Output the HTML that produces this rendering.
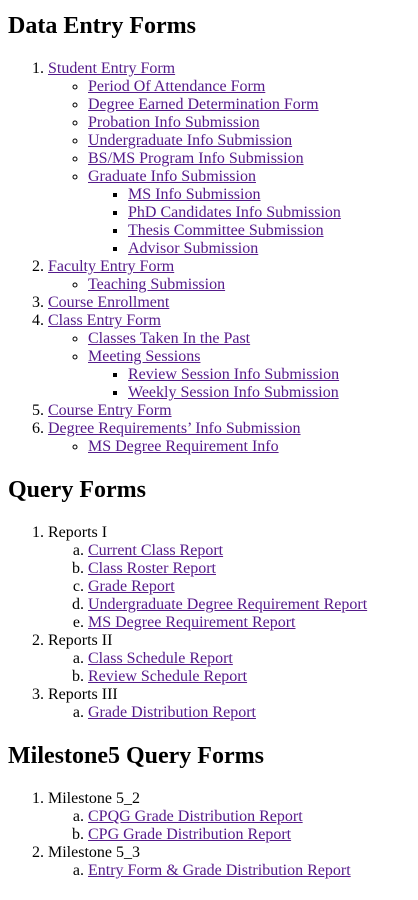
<!DOCTYPE html>
<html><head><meta charset="utf-8"><style>
body{margin:0;padding:1px 8px 0;font-family:"Liberation Serif",serif;font-size:16px;line-height:18px;color:#000;background:#fff}
h2{font-size:24px;line-height:28px;margin:20px 0;font-weight:bold}
h2:first-child{margin-top:11px}
ol,ul{margin:0;padding-left:40px}
body>ol{margin:20px 0}
a{color:#551a8b;text-decoration:underline}
ul{list-style:circle}
ul ul{list-style:square}
ol ol{list-style:lower-alpha}
</style></head><body>
<h2>Data Entry Forms</h2>
<ol>
<li><a>Student Entry Form</a>
<ul>
<li><a>Period Of Attendance Form</a></li>
<li><a>Degree Earned Determination Form</a></li>
<li><a>Probation Info Submission</a></li>
<li><a>Undergraduate Info Submission</a></li>
<li><a>BS/MS Program Info Submission</a></li>
<li><a>Graduate Info Submission</a>
<ul>
<li><a>MS Info Submission</a></li>
<li><a>PhD Candidates Info Submission</a></li>
<li><a>Thesis Committee Submission</a></li>
<li><a>Advisor Submission</a></li>
</ul></li>
</ul></li>
<li><a>Faculty Entry Form</a>
<ul><li><a>Teaching Submission</a></li></ul></li>
<li><a>Course Enrollment</a></li>
<li><a>Class Entry Form</a>
<ul>
<li><a>Classes Taken In the Past</a></li>
<li><a>Meeting Sessions</a>
<ul>
<li><a>Review Session Info Submission</a></li>
<li><a>Weekly Session Info Submission</a></li>
</ul></li>
</ul></li>
<li><a>Course Entry Form</a></li>
<li><a>Degree Requirements’ Info Submission</a>
<ul><li><a>MS Degree Requirement Info</a></li></ul></li>
</ol>
<h2>Query Forms</h2>
<ol>
<li>Reports I
<ol>
<li><a>Current Class Report</a></li>
<li><a>Class Roster Report</a></li>
<li><a>Grade Report</a></li>
<li><a>Undergraduate Degree Requirement Report</a></li>
<li><a>MS Degree Requirement Report</a></li>
</ol></li>
<li>Reports II
<ol>
<li><a>Class Schedule Report</a></li>
<li><a>Review Schedule Report</a></li>
</ol></li>
<li>Reports III
<ol><li><a>Grade Distribution Report</a></li></ol></li>
</ol>
<h2>Milestone5 Query Forms</h2>
<ol>
<li>Milestone 5_2
<ol>
<li><a>CPQG Grade Distribution Report</a></li>
<li><a>CPG Grade Distribution Report</a></li>
</ol></li>
<li>Milestone 5_3
<ol><li><a>Entry Form &amp; Grade Distribution Report</a></li></ol></li>
</ol>
</body></html>
